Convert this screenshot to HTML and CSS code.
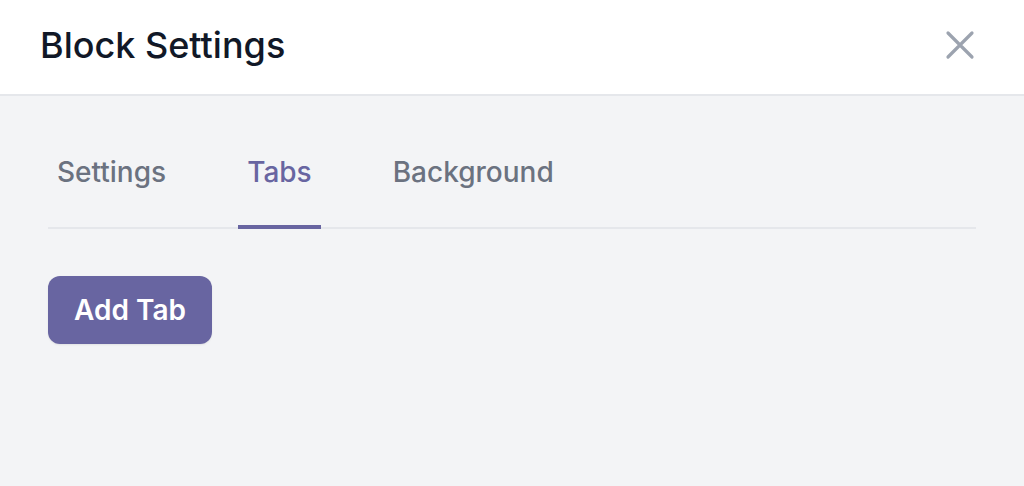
FILE: index.html
```html
<!DOCTYPE html>
<html lang="en">
<head>
<meta charset="utf-8">
<title>Block Settings</title>
<link rel="stylesheet" href="styles.css">
</head>
<body>
<div class="panel">
  <header class="header">
    <h1 class="title">Block Settings</h1>
    <button class="close" aria-label="Close">
      <svg viewBox="0 0 24 24" width="48" height="48" fill="none" stroke="currentColor" stroke-width="1.6" stroke-linecap="round" stroke-linejoin="round"><path d="M6 18L18 6M6 6l12 12"/></svg>
    </button>
  </header>
  <main class="content">
    <nav class="tabs">
      <button class="tab">Settings</button>
      <button class="tab active">Tabs</button>
      <button class="tab">Background</button>
    </nav>
    <div class="actions">
      <button class="btn-primary">Add Tab</button>
    </div>
  </main>
</div>
</body>
</html>
```

FILE: styles.css
```css
* { box-sizing: border-box; }
html, body {
  margin: 0;
  padding: 0;
  height: 100%;
}
body {
  font-family: "Inter", "Noto Sans", sans-serif;
  background: #f3f4f6;
}
.panel {
  min-height: 100%;
  display: flex;
  flex-direction: column;
}
.header {
  background: #ffffff;
  height: 96px;
  border-bottom: 2px solid #e5e7eb;
  display: flex;
  align-items: center;
  justify-content: space-between;
  padding: 0 40px 4px 40px;
}
.title {
  margin: 0;
  font-size: 36px;
  font-weight: 500;
  color: #111827;
  line-height: 48px;
}
.close {
  background: none;
  border: 0;
  padding: 0;
  color: #9ca3af;
  display: flex;
  cursor: pointer;
}
.content {
  padding: 0 48px;
}
.tabs {
  display: flex;
  gap: 63px;
  border-bottom: 2px solid #e5e7eb;
  margin-top: 56px;
}
.tab {
  background: none;
  border: 0;
  font-family: inherit;
  font-size: 28px;
  font-weight: 500;
  line-height: 40px;
  color: #6b7280;
  padding: 0 9px 33px 9px;
  border-bottom: 4px solid transparent;
  margin-bottom: -2px;
  cursor: pointer;
}
.tab.active {
  color: #6865a1;
  border-bottom-color: #6865a1;
}
.actions {
  margin-top: 47px;
  display: flex;
}
.btn-primary {
  background: #6865a1;
  color: #ffffff;
  border: 0;
  border-radius: 12px;
  height: 68px;
  padding: 0 26px;
  font-family: inherit;
  font-size: 28px;
  font-weight: 600;
  box-shadow: 0 1px 2px rgba(0,0,0,0.08);
  cursor: pointer;
}
```
